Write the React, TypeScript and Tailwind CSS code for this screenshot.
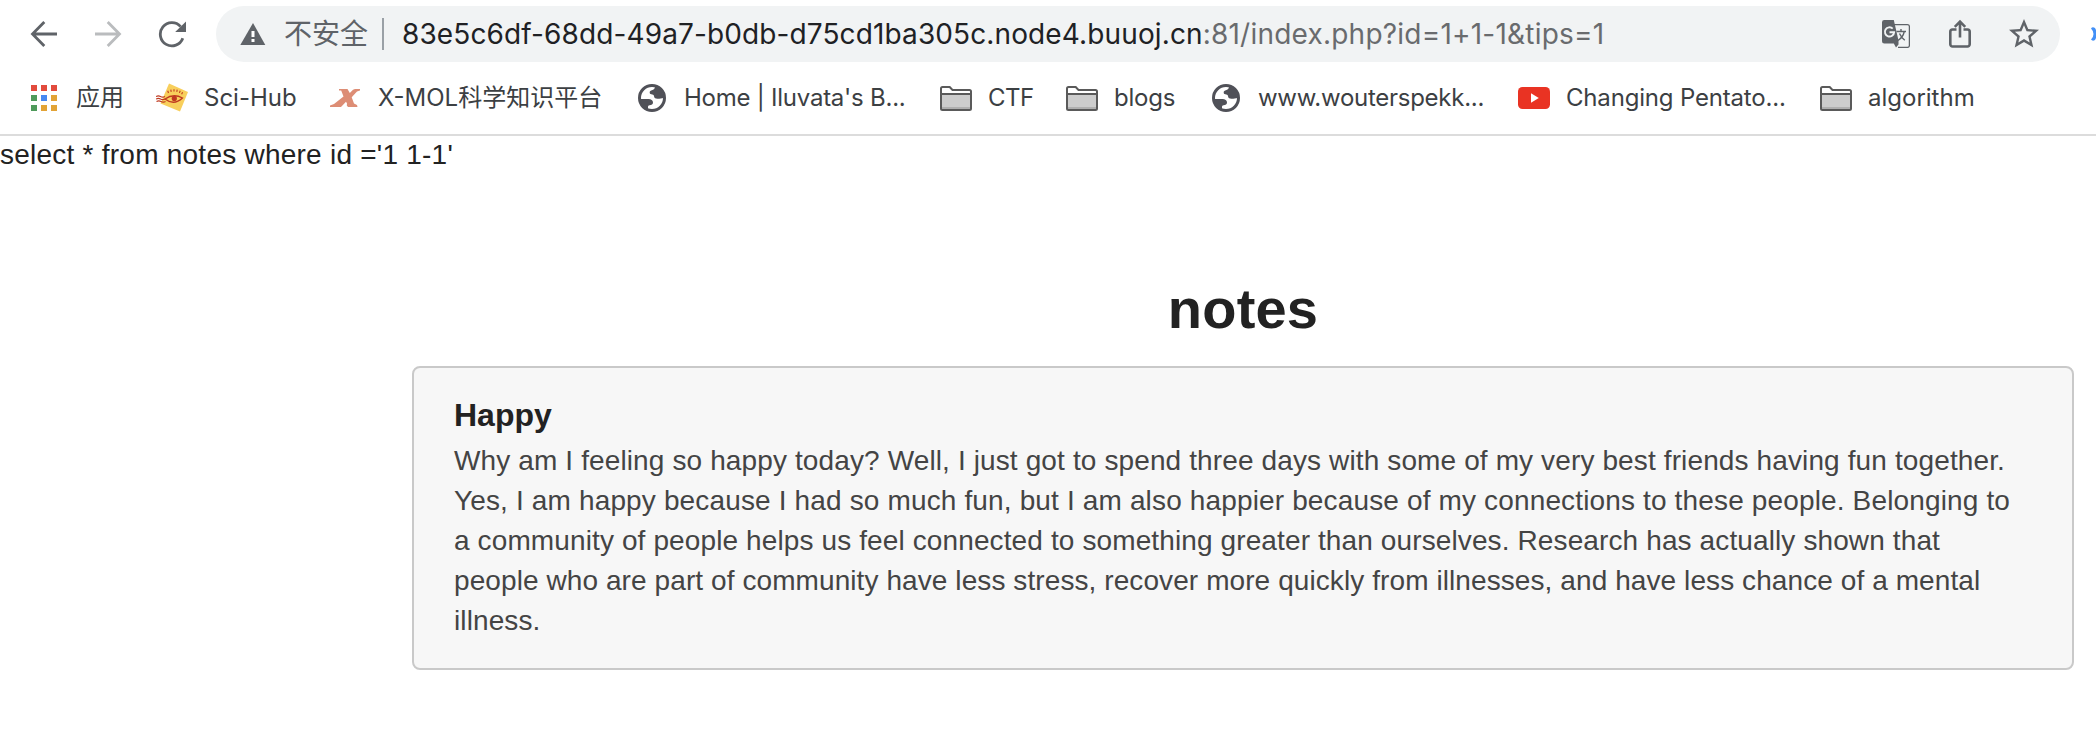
import type { ReactNode } from 'react';
import { MdStarBorder } from 'react-icons/md';

const UI_FONT = "font-['Inter','Noto_Sans_CJK_SC',sans-serif]";

function BackIcon() {
  return (
    <svg width="28" height="28" viewBox="0 0 28 28" fill="none" stroke="currentColor" strokeWidth="2.8">
      <path d="M27 14H3M14.3 2 2.5 14l11.800 12" />
    </svg>
  );
}

function ReloadIcon() {
  return (
    <svg width="28" height="28" viewBox="0 0 28 28">
      <path d="M24.800 18.300A11.600 11.600 0 1 1 22.600 6.600" fill="none" stroke="#5f6368" strokeWidth="2.800" />
      <path d="M28 1.500V12H17.200z" fill="#5f6368" />
    </svg>
  );
}

function WarningIcon() {
  return (
    <svg width="26" height="23" viewBox="0 0 26 23">
      <path d="M13 0 25.300 22H.3z" fill="#5f6368" />
      <path d="M11.500 8h3v6h-3zM11.500 16h3v3h-3z" fill="#fff" />
    </svg>
  );
}

function TranslateIcon() {
  return (
    <svg width="28" height="28" viewBox="0 0 28 28">
      <path d="M12 4.600h13.400a2 2 0 0 1 2 2V25.400a2 2 0 0 1-2 2H16" fill="none" stroke="#5f6368" strokeWidth="1.300" />
      <path d="M14.500 11.500h9.500M19 9v2.500M22.300 11.500c-.8 3.800-3 6.800-6.300 9M17.500 13.500c1.300 3 3 5 5.300 6.800" fill="none" stroke="#5f6368" strokeWidth="1.400" />
      <path d="M2.300 0h9.500l4.700 20.500v4L14 27.500 11.800 23.500H2.300A2.300 2.300 0 0 1 0 21.200V2.300A2.300 2.300 0 0 1 2.300 0z" fill="#5f6368" />
      <path d="M10.700 8.600a4.600 4.600 0 1 0 1.400 3.700H7.500" fill="none" stroke="#f1f3f4" strokeWidth="1.900" />
    </svg>
  );
}

function ShareIcon() {
  return (
    <svg width="24" height="30" viewBox="0 0 24 30" fill="none" stroke="#5f6368" strokeWidth="2.600">
      <path d="M8.500 10.500H4.500a2.200 2.200 0 0 0-2.200 2.200v12.600a2.200 2.200 0 0 0 2.200 2.200h15a2.200 2.200 0 0 0 2.200-2.200V12.700a2.200 2.200 0 0 0-2.200-2.200h-4" />
      <path d="M12 18.500V3M6.800 7.800 12 2.600l5.200 5.200" />
    </svg>
  );
}

const APP_COLORS = ['#e24b3d', '#e24b3d', '#e24b3d', '#4f9a5b', '#4688f1', '#e2a336', '#4f9a5b', '#e2a336', '#e2a336'];

function AppsIcon() {
  return (
    <svg width="26" height="26" viewBox="0 0 26 26">
      {APP_COLORS.map((c, i) => (
        <rect key={i} x={(i % 3) * 10} y={Math.floor(i / 3) * 10} width="6" height="6" fill={c} />
      ))}
    </svg>
  );
}

function SciHubIcon() {
  return (
    <svg width="32" height="30" viewBox="0 0 32 30">
      <path d="M13 0.500 32 9 24 28.500 4.500 20.500z" fill="#f8cf5c" />
      <g fill="none" stroke="#bf3a20" strokeWidth="1.100">
        <path d="M0 13.500q2.300-1.200 4.500 0t4.500 0M0 16q2.300-1.200 4.500 0t4.500 0M.5 18.500q2.300-1.200 4.500 0t4.500 0" />
        <path d="M9 16q8.500-6 17.500-1-8.500 8-17.500 1z" strokeWidth="1.300" />
        <path d="m12.500 10-.8-2.300M15.200 8.900l-.4-2.200M18 8.500V6.300M20.800 8.900l.4-2.200M23.400 9.900l.8-2.200M25.600 11.200l1-2" />
      </g>
      <circle cx="18.300" cy="15.400" r="2.600" fill="#bf3a20" />
    </svg>
  );
}

function XMolIcon() {
  return (
    <svg width="30" height="18" viewBox="0 0 30 18" fill="#dd8d75">
      <path d="M9 0h8.500l2.300 4 3.200-3.300L25 0h5v1.500l-3 1-5.300 5.800L24 14.500l3 1.500.5 2H18l-1.200-1.500.2-2-1-1.800-5 5.300H0v-1.500l4-1.500 9.500-7.500-2.300-6L9 1.500z" />
    </svg>
  );
}

function GlobeIcon() {
  return (
    <svg width="28" height="28" viewBox="0 0 28 28">
      <circle cx="14" cy="14" r="12.500" fill="#fff" stroke="#505158" strokeWidth="3" />
      <path d="M17 2.500c0 2-1 2.800-2.500 3.500-2 .8-3 1.200-2.800 2.700.2 1.500 1.300 1.600 2.500 1.700 1.500.1 1.800 1 1.900 2.200.1 1.600 1.500 2.100 3.300 2.200 2.200.1 4-.8 6.200-.8C25.500 8 22 3.500 17 2.500z" fill="#505158" />
      <path d="M2.500 15h8c2.600 0 4.500 1.300 4.500 3.500 0 2-1.500 2.600-3.500 2.800-1 .2-1.500.8-1.500 1.700v2.500C5.500 24 2.500 20 2.500 15z" fill="#505158" />
    </svg>
  );
}

function FolderIcon() {
  return (
    <svg width="32" height="25" viewBox="0 0 32 25">
      <path d="M1 8V2.500Q1 1 2.500 1h7.200L12.500 4H29.500Q31 4 31 5.500V22.500Q31 24 29.500 24h-27Q1 24 1 22.500z" fill="#fff" />
      <path d="M2 8h28v15H2z" fill="#cdcdcd" />
      <path d="M2 21h28v2H2z" fill="#b0b0b0" />
      <path d="M1 8V2.500Q1 1 2.500 1h7.200L12.500 4H29.500Q31 4 31 5.500V22.500Q31 24 29.500 24h-27Q1 24 1 22.500zM1 8h30" fill="none" stroke="#5a5a5a" strokeWidth="2" />
    </svg>
  );
}

function YouTubeIcon() {
  return (
    <svg width="32" height="22" viewBox="0 0 32 22">
      <rect width="32" height="22" rx="4.500" fill="#e93323" />
      <path d="M13 6.300 20.800 11 13 15.700z" fill="#fff" />
    </svg>
  );
}

type Bookmark = { icon: ReactNode; label: string; slot: string; iconBox: string; text: string };

const BOOKMARKS: Bookmark[] = [
  { icon: <AppsIcon />, label: '应用', slot: 'w-[125px]', iconBox: 'w-[45px]', text: '' },
  { icon: <SciHubIcon />, label: 'Sci-Hub', slot: 'w-[174px]', iconBox: 'w-12', text: '' },
  { icon: <XMolIcon />, label: 'X-MOL科学知识平台', slot: 'w-[308px]', iconBox: 'w-12', text: '' },
  { icon: <GlobeIcon />, label: "Home | Iluvata's B...", slot: 'w-[302px]', iconBox: 'w-[46px]', text: 'tracking-[-0.24px]' },
  { icon: <FolderIcon />, label: 'CTF', slot: 'w-[126px]', iconBox: 'w-12', text: 'tracking-[-0.5px]' },
  { icon: <FolderIcon />, label: 'blogs', slot: 'w-[146px]', iconBox: 'w-12', text: 'tracking-[-0.2px]' },
  { icon: <GlobeIcon />, label: 'www.wouterspekk...', slot: 'w-[306px]', iconBox: 'w-[46px]', text: 'tracking-[-0.27px]' },
  { icon: <YouTubeIcon />, label: 'Changing Pentato...', slot: 'w-[302px]', iconBox: 'w-12', text: 'tracking-[-0.18px]' },
  { icon: <FolderIcon />, label: 'algorithm', slot: 'w-[160px]', iconBox: 'w-12', text: '' },
];

const NOTE_LINES = [
  { text: 'Why am I feeling so happy today? Well, I just got to spend three days with some of my very best friends having fun together.', tracking: 'tracking-[0.124px]' },
  { text: 'Yes, I am happy because I had so much fun, but I am also happier because of my connections to these people. Belonging to', tracking: 'tracking-[0.147px]' },
  { text: 'a community of people helps us feel connected to something greater than ourselves. Research has actually shown that', tracking: 'tracking-[0.118px]' },
  { text: 'people who are part of community have less stress, recover more quickly from illnesses, and have less chance of a mental', tracking: 'tracking-[0.087px]' },
  { text: 'illness.', tracking: 'tracking-[0.1px]' },
];

function Toolbar() {
  return (
    <div className="flex h-[68px] items-center">
      <div className="flex w-[216px] shrink-0 items-center pl-[30px]">
        <span className="w-16 text-[#5f6368]"><BackIcon /></span>
        <span className="w-16 text-[#babcbe]"><span className="block w-7 -scale-x-100"><BackIcon /></span></span>
        <ReloadIcon />
      </div>
      <div className="flex h-14 w-[1844px] shrink-0 items-center rounded-full bg-[#f1f3f4] pl-6 text-[28px] leading-10 whitespace-pre">
        <WarningIcon />
        <span className="ml-[18px] w-[98px] text-[#5f6368]">不安全</span>
        <span className="h-8 w-0.5 bg-[#9aa0a6]" />
        <span className="ml-[18px] tracking-[0.12px] text-[#202124]">83e5c6df-68dd-49a7-b0db-d75cd1ba305c.node4.buuoj.cn</span>
        <span className="tracking-[0.22px] text-[#696b6e]">:81/index.php?id=1+1-1&amp;tips=1</span>
        <span className="mr-[18px] ml-auto flex items-center gap-x-[38px] text-[#5f6368]">
          <TranslateIcon />
          <ShareIcon />
          <MdStarBorder size={36} className="-ml-1" />
        </span>
      </div>
      <svg width="5" height="14" viewBox="0 0 5 14" className="ml-auto shrink-0">
        <path d="M0 1.500Q1.500-.5 4 1L5 3v8l-1 2Q1.500 14.500 0 12.500 2.500 10 2.500 7T0 1.500z" fill="#4390f7" />
      </svg>
    </div>
  );
}

function BookmarksBar() {
  return (
    <div className="flex h-[60px] items-center pl-[31px] text-2xl leading-8 whitespace-nowrap text-[#3c4043]">
      {BOOKMARKS.map((b) => (
        <div key={b.label} className={`flex shrink-0 items-center ${b.slot}`}>
          <span className={`shrink-0 ${b.iconBox}`}>{b.icon}</span>
          <span className={b.text}>{b.label}</span>
        </div>
      ))}
    </div>
  );
}

export default function App() {
  return (
    <div className="h-[756px] w-[2096px] overflow-hidden bg-white">
      <header className={`h-[136px] border-b-2 border-[#dcdcdc] ${UI_FONT}`}>
        <Toolbar />
        <BookmarksBar />
      </header>
      <main className="flow-root font-['Liberation_Sans',Arial,sans-serif] text-[28px] text-[#222]">
        <p className="mt-px leading-9 tracking-[0.24px]">select * from notes where id =&apos;1 1-1&apos;</p>
        <div className="mt-[100px] ml-[412px] w-[1662px]">
          <h1 className="text-center text-[56px] leading-[72px] font-bold tracking-[0.2px]">notes</h1>
          <section className="mt-[21px] h-[304px] rounded-lg border-2 border-[#c9c9c9] bg-[#f7f7f7] pt-[25px] pl-10">
            <h2 className="text-[32px] leading-[44px] font-bold">Happy</h2>
            <p className="mt-1 leading-10 whitespace-nowrap text-[#444]">
              {NOTE_LINES.map((l) => (
                <span key={l.text} className={`block ${l.tracking}`}>{l.text}</span>
              ))}
            </p>
          </section>
        </div>
      </main>
    </div>
  );
}
